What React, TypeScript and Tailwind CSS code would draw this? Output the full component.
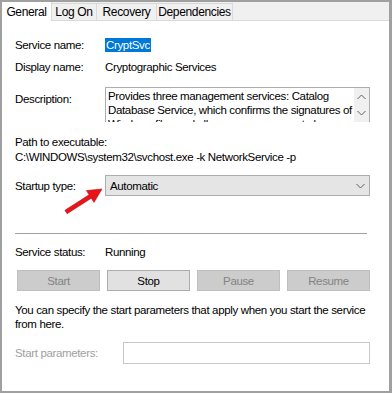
import React from "react";

const tabs = ["General", "Log On", "Recovery", "Dependencies"];
const tabWidths = ["w-[50px]", "w-[45px]", "w-[60px]", "w-[76px]"];

const Chevron = ({ up = false, className = "" }: { up?: boolean; className?: string }) => (
    <svg width="9" height="6" viewBox="0 0 9 6" className={className}>
        <path
            d={up ? "M0.5 5 L4.5 1 L8.5 5" : "M0.5 1 L4.5 5 L8.5 1"}
            fill="none"
            stroke="#606060"
            strokeWidth="1"
        />
    </svg>
);

const Button = ({ label, enabled = false }: { label: string; enabled?: boolean }) => (
    <div
        className={
            enabled
                ? "w-[83px] h-[21px] flex items-center justify-center border border-[#adadad] bg-[#e1e1e1] text-black"
                : "w-[83px] h-[21px] flex items-center justify-center border border-[#bfbfbf] bg-[#cccccc] text-[#838383]"
        }
    >
        {label}
    </div>
);

export default function App() {
    return (
        <div
            className="relative w-[392px] h-[393px] bg-white border-t-2 border-l-2 border-r-[3px] border-b-2 border-[#a0a0a0] text-[11.5px] leading-[14px] tracking-[-0.35px] text-black overflow-hidden"
            style={{ fontFamily: '"Liberation Sans", Arial, sans-serif' }}
        >
            {/* Tab strip */}
            <div className="flex items-end h-[19px] bg-[#f0f0f0] border-b border-[#d9d9d9]">
                {tabs.map((tab, i) => (
                    <div
                        key={tab}
                        className={
                            i === 0
                                ? `${tabWidths[i]} h-[19px] -mb-px bg-white border-r border-[#d9d9d9] flex items-center justify-center text-[12px]`
                                : `${tabWidths[i]} h-[17px] border-r border-t border-[#d9d9d9] flex items-center justify-center text-[12px]`
                        }
                    >
                        {tab}
                    </div>
                ))}
            </div>

            {/* Content */}
            <div className="flex flex-col pl-[13px] pr-[19px]">
                <div className="flex items-center h-[20px] mt-[14px]">
                    <span className="w-[90px]">Service name:</span>
                    <span className="bg-[#0078d7] text-white px-px">CryptSvc</span>
                </div>
                <div className="flex items-center h-[20px] mt-[2px]">
                    <span className="w-[90px]">Display name:</span>
                    <span>Cryptographic Services</span>
                </div>

                <div className="flex mt-[10px]">
                    <span className="w-[90px] pt-[5px]">Description:</span>
                    <div className="flex flex-1 h-[35px] border border-[#adadad] border-b-0 bg-white overflow-hidden">
                        <div className="flex-1 pl-[2px] pt-[1px] leading-[14px]">
                            Provides three management services: Catalog Database Service, which confirms the signatures of
                            Windows files and allows new programs to be installed.
                        </div>
                        <div className="w-[15px] bg-[#f0f0f0] flex flex-col items-center justify-between py-[6px]">
                            <Chevron up />
                            <Chevron />
                        </div>
                    </div>
                </div>

                <div className="mt-[13px]">Path to executable:</div>
                <div className="mt-[1px]">C:\WINDOWS\system32\svchost.exe -k NetworkService -p</div>

                <div className="flex items-center mt-[11px]">
                    <span className="w-[90px]">Startup type:</span>
                    <div className="flex flex-1 items-center justify-between h-[21px] border border-[#adadad] bg-[#e5e5e5] pl-[4px] pr-[4px]">
                        <span>Automatic</span>
                        <Chevron />
                    </div>
                </div>

                <div className="h-px bg-[#a0a0a0] mt-[37px] mr-[3px]" />

                <div className="flex items-center mt-[11px]">
                    <span className="w-[90px]">Service status:</span>
                    <span>Running</span>
                </div>

                <div className="flex gap-[7px] mt-[11px] pl-[2px]">
                    <Button label="Start" />
                    <Button label="Stop" enabled />
                    <Button label="Pause" />
                    <Button label="Resume" />
                </div>

                <p className="mt-[12px] -mr-[10px]">
                    You can specify the start parameters that apply when you start the service from here.
                </p>

                <div className="flex items-center mt-[11px]">
                    <span className="w-[108px] text-[#a0a0a0]">Start parameters:</span>
                    <div className="flex-1 h-[22px] border border-[#c8c8c8] bg-white" />
                </div>
            </div>

            {/* Red callout arrow */}
            <svg className="absolute left-0 top-0 pointer-events-none" width="392" height="393">
                <polygon
                    points="64.9,210.3 89.1,194.8 86.4,190.6 102,189 94,202.4 91.3,198.2 67.1,213.7"
                    transform="translate(-2,-2)"
                    fill="#e8141b"
                    stroke="#c40f14"
                    strokeWidth="0.6"
                    strokeLinejoin="round"
                />
            </svg>
        </div>
    );
}
